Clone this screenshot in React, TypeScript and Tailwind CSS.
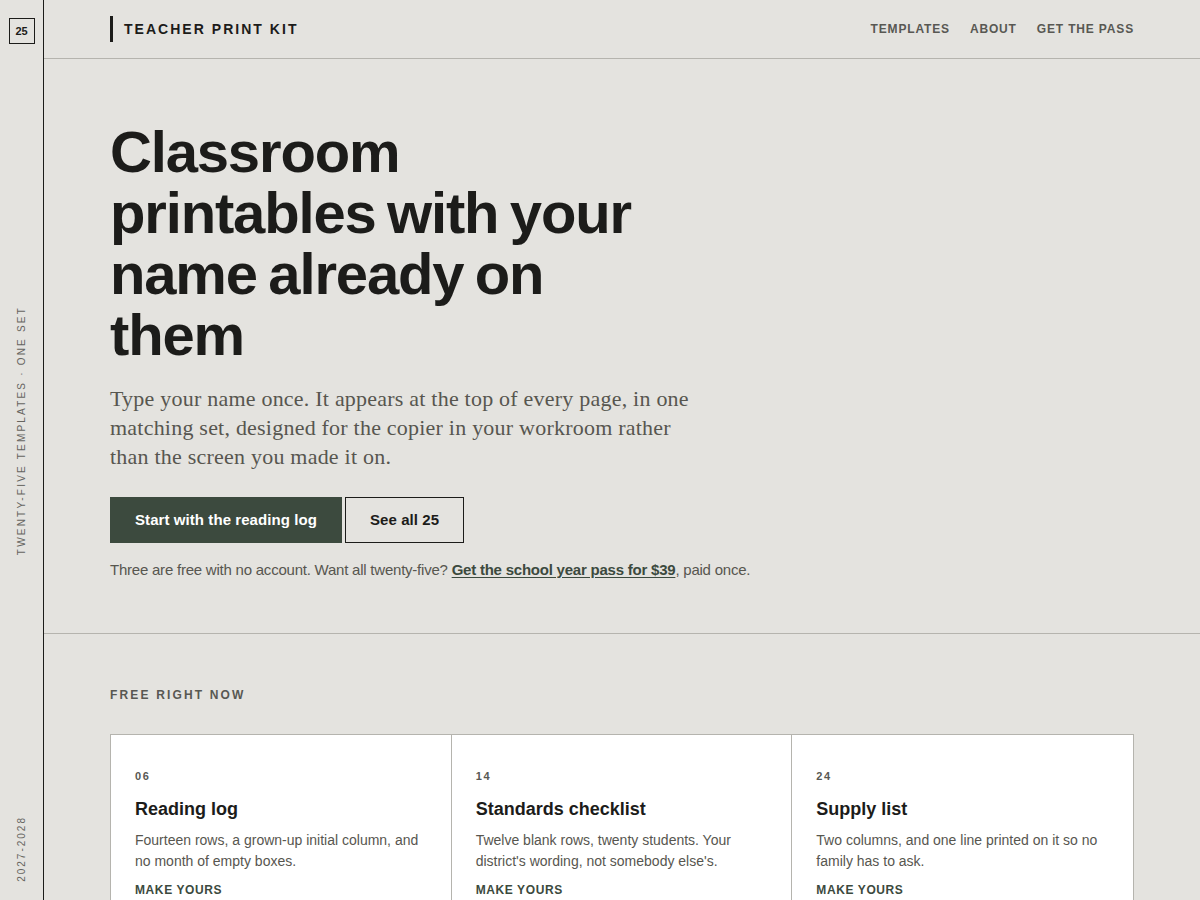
import React from "react";

const sans = { fontFamily: '"Liberation Sans", Arial, sans-serif' };

const cards = [
  {
    n: "06",
    title: "Reading log",
    desc: "Fourteen rows, a grown-up initial column, and no month of empty boxes.",
  },
  {
    n: "14",
    title: "Standards checklist",
    desc: "Twelve blank rows, twenty students. Your district's wording, not somebody else's.",
  },
  {
    n: "24",
    title: "Supply list",
    desc: "Two columns, and one line printed on it so no family has to ask.",
  },
];

export default function App() {
  return (
    <div
      className="flex items-start min-h-screen bg-[#e4e3df] text-[#1c1c1a] font-['Liberation_Sans',Arial,sans-serif]"
      style={sans}
    >
      <aside className="sticky top-0 h-screen w-[44px] shrink-0 border-r border-[#1c1c1a] flex flex-col items-center justify-between py-[18px]">
        <div className="w-[26px] h-[26px] border border-[#1c1c1a] flex items-center justify-center text-[11px] font-bold leading-none">
          25
        </div>
        <div className="[writing-mode:vertical-rl] rotate-180 text-[10px] tracking-[0.22em] text-[#66655f] leading-none whitespace-nowrap">
          TWENTY-FIVE TEMPLATES · ONE SET
        </div>
        <div className="[writing-mode:vertical-rl] rotate-180 text-[10px] tracking-[0.2em] text-[#66655f] leading-none whitespace-nowrap">
          2027-2028
        </div>
      </aside>

      <main className="flex-1 min-w-0">
        <header className="h-[59px] border-b border-[#b5b4ae] flex items-center justify-between px-[66px]">
          <div className="flex items-center">
            <span className="block w-[3px] h-[26px] bg-[#1c1c1a]" />
            <span className="ml-[11px] text-[14px] font-bold tracking-[0.145em] leading-none">
              TEACHER PRINT KIT
            </span>
          </div>
          <nav className="flex items-center gap-[20px] text-[12px] font-bold tracking-[0.07em] text-[#585853]">
            <a>TEMPLATES</a>
            <a>ABOUT</a>
            <a>GET THE PASS</a>
          </nav>
        </header>

        <section className="px-[66px] pt-[62px] pb-[52px] border-b border-[#b5b4ae]">
          <h1 className="text-[58px] leading-[61px] font-bold tracking-[-0.02em] [word-spacing:-0.06em] max-w-[560px]">
            Classroom printables with your name already on them
          </h1>
          <p
            className="mt-[19px] max-w-[595px] text-[22px] leading-[29px] tracking-[0.01em] text-[#57564f]"
            style={{ fontFamily: '"Liberation Serif", "Times New Roman", serif' }}
          >
            Type your name once. It appears at the top of every page, in one matching set, designed for the copier in
            your workroom rather than the screen you made it on.
          </p>
          <div className="mt-[26px] flex items-center gap-[3px]">
            <a className="h-[46px] px-[25px] flex items-center bg-[#3c4a3e] text-white text-[15px] font-bold tracking-[0.005em]">
              Start with the reading log
            </a>
            <a className="h-[46px] px-[24px] flex items-center border border-[#1c1c1a] text-[15px] font-bold tracking-[0.005em]">
              See all 25
            </a>
          </div>
          <p className="mt-[16px] text-[15px] leading-[22px] tracking-[-0.015em] text-[#57564f]">
            Three are free with no account. Want all twenty-five?{" "}
            <a className="font-bold text-[#3c4a3e] underline underline-offset-2">Get the school year pass for $39</a>,
            paid once.
          </p>
        </section>

        <section className="px-[66px] pt-[53px] pb-[60px]">
          <div className="text-[12px] leading-[16px] font-bold tracking-[0.18em] text-[#585853]">FREE RIGHT NOW</div>
          <div className="mt-[31px] grid grid-cols-3 border border-[#b5b4ae] divide-x divide-[#b5b4ae] bg-white">
            {cards.map((c) => (
              <div key={c.n} className="px-[24px] pt-[33px] pb-[32px]">
                <div className="text-[11px] leading-[16px] font-bold tracking-[0.15em] text-[#585853]">{c.n}</div>
                <div className="mt-[13px] text-[18px] leading-[24px] font-bold">{c.title}</div>
                <p className="mt-[9px] text-[14px] leading-[21px] text-[#57564f]">{c.desc}</p>
                <div className="mt-[10px] text-[12px] leading-[16px] font-bold tracking-[0.05em] text-[#3c4a3e]">
                  MAKE YOURS
                </div>
              </div>
            ))}
          </div>
        </section>
      </main>
    </div>
  );
}
